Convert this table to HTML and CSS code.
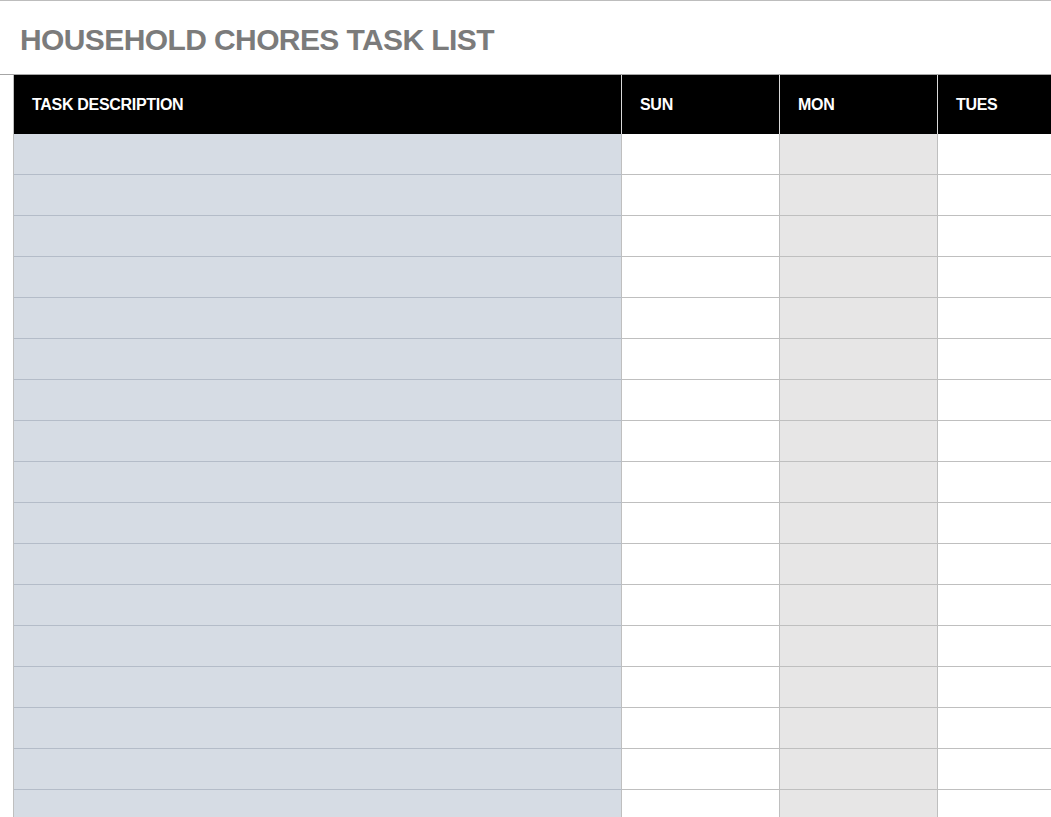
FILE: index.html
```html
<!DOCTYPE html>
<html>
<head>
<meta charset="utf-8">
<link rel="stylesheet" href="styles.css">
</head>
<body>
<div class="page">
  <header class="title-bar">
    <h1 class="title">HOUSEHOLD CHORES TASK LIST</h1>
  </header>
  <div class="sheet">
    <div class="table">
      <div class="row head">
        <div class="cell task">TASK DESCRIPTION</div>
        <div class="cell day">SUN</div>
        <div class="cell day">MON</div>
        <div class="cell day last">TUES</div>
      </div>
      <div class="row"><div class="cell task"></div><div class="cell day"></div><div class="cell day alt"></div><div class="cell day last"></div></div>
      <div class="row"><div class="cell task"></div><div class="cell day"></div><div class="cell day alt"></div><div class="cell day last"></div></div>
      <div class="row"><div class="cell task"></div><div class="cell day"></div><div class="cell day alt"></div><div class="cell day last"></div></div>
      <div class="row"><div class="cell task"></div><div class="cell day"></div><div class="cell day alt"></div><div class="cell day last"></div></div>
      <div class="row"><div class="cell task"></div><div class="cell day"></div><div class="cell day alt"></div><div class="cell day last"></div></div>
      <div class="row"><div class="cell task"></div><div class="cell day"></div><div class="cell day alt"></div><div class="cell day last"></div></div>
      <div class="row"><div class="cell task"></div><div class="cell day"></div><div class="cell day alt"></div><div class="cell day last"></div></div>
      <div class="row"><div class="cell task"></div><div class="cell day"></div><div class="cell day alt"></div><div class="cell day last"></div></div>
      <div class="row"><div class="cell task"></div><div class="cell day"></div><div class="cell day alt"></div><div class="cell day last"></div></div>
      <div class="row"><div class="cell task"></div><div class="cell day"></div><div class="cell day alt"></div><div class="cell day last"></div></div>
      <div class="row"><div class="cell task"></div><div class="cell day"></div><div class="cell day alt"></div><div class="cell day last"></div></div>
      <div class="row"><div class="cell task"></div><div class="cell day"></div><div class="cell day alt"></div><div class="cell day last"></div></div>
      <div class="row"><div class="cell task"></div><div class="cell day"></div><div class="cell day alt"></div><div class="cell day last"></div></div>
      <div class="row"><div class="cell task"></div><div class="cell day"></div><div class="cell day alt"></div><div class="cell day last"></div></div>
      <div class="row"><div class="cell task"></div><div class="cell day"></div><div class="cell day alt"></div><div class="cell day last"></div></div>
      <div class="row"><div class="cell task"></div><div class="cell day"></div><div class="cell day alt"></div><div class="cell day last"></div></div>
      <div class="row"><div class="cell task"></div><div class="cell day"></div><div class="cell day alt"></div><div class="cell day last"></div></div>
    </div>
  </div>
</div>
</body>
</html>
```

FILE: styles.css
```css
html, body {
  margin: 0;
  padding: 0;
  background: #ffffff;
}
body {
  font-family: "Liberation Sans", Arial, sans-serif;
}
.page {
  width: 1051px;
  height: 817px;
  overflow: hidden;
  border-top: 1px solid #bdbdbd;
  box-sizing: border-box;
}
.title-bar {
  height: 73px;
  display: flex;
  align-items: center;
  padding-left: 20px;
}
.title {
  margin: 0;
  margin-top: 4px;
  font-size: 30px;
  font-weight: bold;
  color: #7b7b7b;
  letter-spacing: -0.6px;
  white-space: nowrap;
}
.sheet {
  border-top: 1px solid #a6a6a6;
  padding-left: 13px;
}
.table {
  border-left: 1px solid #bfbfbf;
  display: flex;
  flex-direction: column;
}
.row {
  display: flex;
  height: 41px;
  flex: none;
}
.row .cell {
  flex: none;
  border-bottom: 1px solid #bfbfbf;
  border-right: 1px solid #bfbfbf;
  box-sizing: border-box;
  height: 41px;
}
.row .task {
  width: 608px;
  background: #d6dce4;
  border-bottom-color: #b4bcc8;
}
.row .day {
  width: 158px;
  background: #ffffff;
}
.row .alt {
  background: #e7e6e6;
}
.row .last {
  width: 113px;
  border-right: none;
}
.row.head {
  height: 59px;
}
.row.head .cell {
  height: 59px;
  background: #000000;
  color: #ffffff;
  font-size: 16px;
  font-weight: bold;
  letter-spacing: -0.3px;
  display: flex;
  align-items: center;
  padding-left: 18px;
  padding-top: 1px;
  border-bottom: none;
  border-right: 1px solid #d9d9d9;
}
.row.head .last {
  border-right: none;
}
```
